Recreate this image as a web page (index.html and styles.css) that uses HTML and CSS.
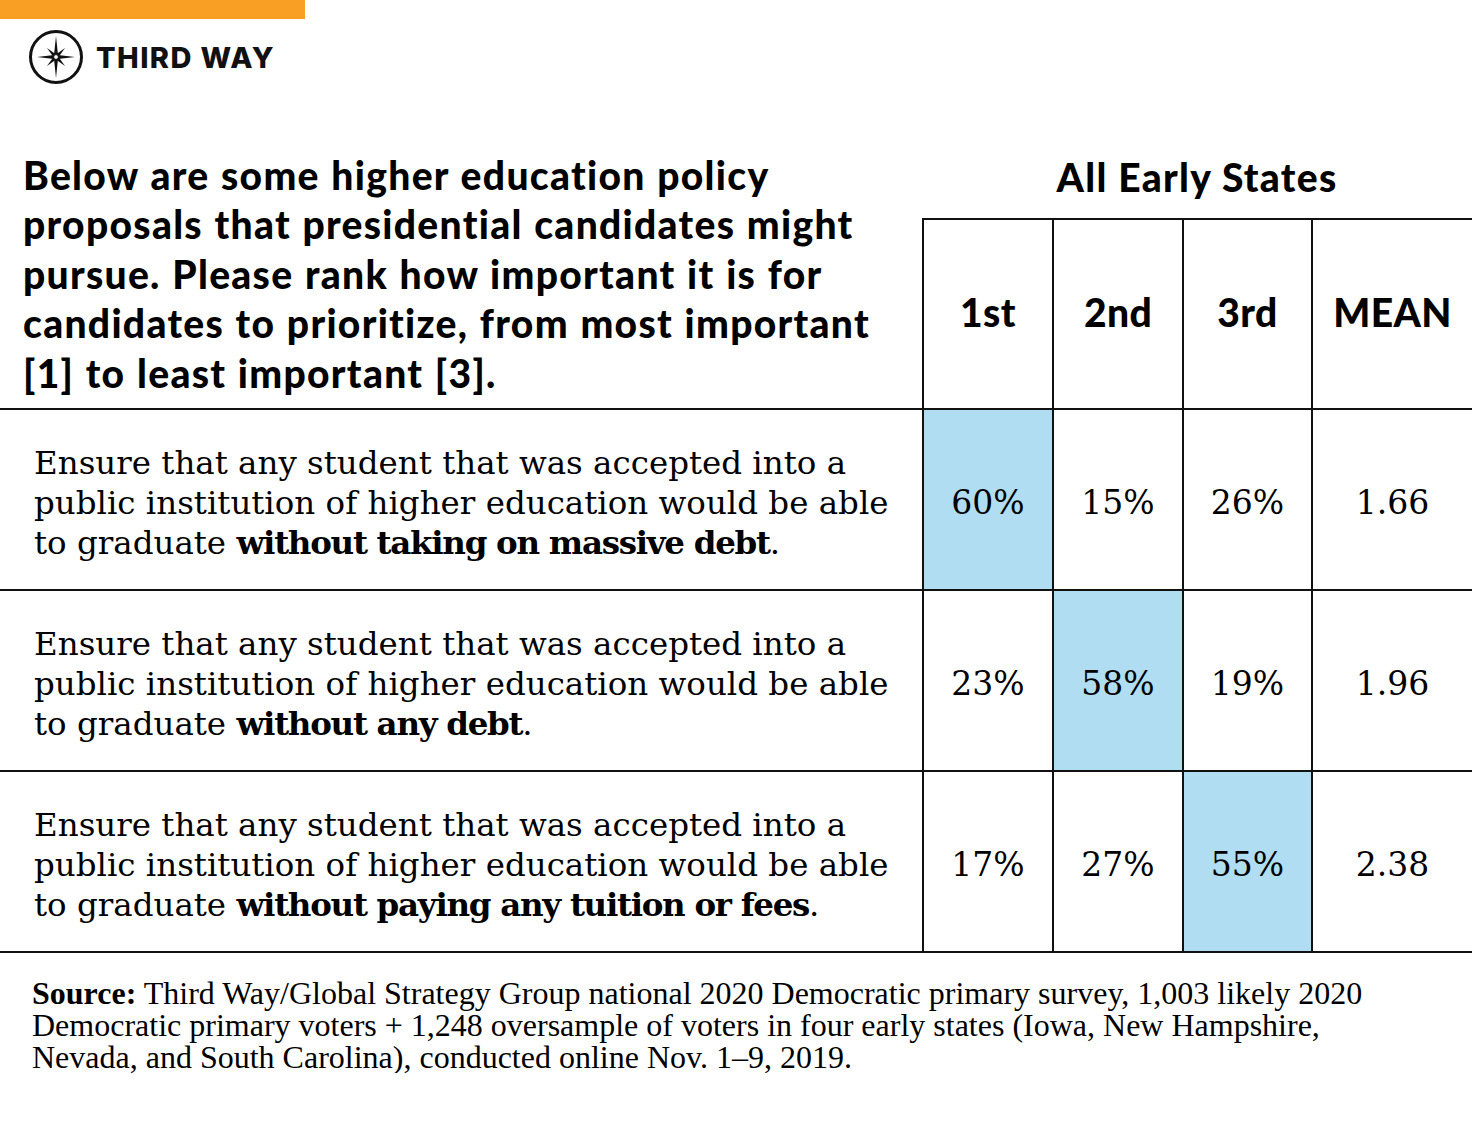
FILE: index.html
```html
<!DOCTYPE html>
<html lang="en">
<head>
<meta charset="utf-8">
<title>Third Way – Higher education policy priorities</title>
<link rel="stylesheet" href="styles.css">
</head>
<body>
<div class="topbar"></div>
<header class="brand">
  <svg class="brand-mark" width="58" height="58" viewBox="0 0 58 58" aria-hidden="true">
    <circle cx="29" cy="29" r="25.5" fill="none" stroke="#111" stroke-width="3"/>
    <polygon points="29,8 31,27 48,29 31,31 29,50 27,31 10,29 27,27" fill="#111"/>
    <polygon points="20,20 30.5,27.5 38,38 27.5,30.5" fill="#111"/>
    <polygon points="38,20 30.5,30.5 20,38 27.5,27.5" fill="#111"/>
    <circle cx="29" cy="29" r="2.4" fill="#fff" stroke="#111" stroke-width="1"/>
  </svg>
  <span class="brand-name">THIRD WAY</span>
</header>

<main class="table">
  <div class="question"><p>Below are some higher education policy<br>proposals that presidential candidates might<br>pursue. Please rank how important it is for<br>candidates to prioritize, from most important<br>[1] to least important [3].</p></div>
  <div class="group-title">All Early States</div>
  <div class="col-head">1st</div>
  <div class="col-head">2nd</div>
  <div class="col-head">3rd</div>
  <div class="col-head">MEAN</div>

  <div class="item"><p>Ensure that any student that was accepted into a public institution of higher education would be able to graduate <b>without taking on massive debt</b>.</p></div>
  <div class="val hl">60%</div>
  <div class="val">15%</div>
  <div class="val">26%</div>
  <div class="val">1.66</div>

  <div class="item"><p>Ensure that any student that was accepted into a public institution of higher education would be able to graduate <b>without any debt</b>.</p></div>
  <div class="val">23%</div>
  <div class="val hl">58%</div>
  <div class="val">19%</div>
  <div class="val">1.96</div>

  <div class="item"><p>Ensure that any student that was accepted into a public institution of higher education would be able to graduate <b>without paying any tuition or fees</b>.</p></div>
  <div class="val">17%</div>
  <div class="val">27%</div>
  <div class="val hl">55%</div>
  <div class="val">2.38</div>
</main>

<footer class="source"><b>Source:</b> Third Way/Global Strategy Group national 2020 Democratic primary survey, 1,003 likely 2020 Democratic primary voters + 1,248 oversample of voters in four early states (Iowa, New Hampshire, Nevada, and South Carolina), conducted online Nov. 1–9, 2019.</footer>
</body>
</html>
```

FILE: styles.css
```css
* { box-sizing: border-box; }

body {
  margin: 0;
  background: #fff;
  color: #000;
  width: 1480px;
}

p { margin: 0; }

.topbar {
  width: 305px;
  height: 19px;
  background: #f9a024;
}

.brand {
  display: flex;
  align-items: center;
  gap: 11px;
  padding: 0 0 0 27px;
  height: 76px;
}

.brand-mark { display: block; }

.brand-name {
  font-family: "Inter", "Liberation Sans", sans-serif;
  font-weight: 800;
  font-size: 29px;
  letter-spacing: 1.4px;
  color: #111;
}

.table {
  display: grid;
  grid-template-columns: 922px 130px 130px 129px 161px;
  grid-template-rows: 63px 192px repeat(3, 181px);
  margin-top: 60px;
  width: 1472px;
}

.question {
  grid-row: 1 / span 2;
  display: flex;
  align-items: flex-end;
  padding: 0 0 10px 23px;
  border-bottom: 2px solid #111;
  font-family: "Lato", "Liberation Sans", sans-serif;
  font-weight: 900;
  font-size: 39px;
  line-height: 49.5px;
  letter-spacing: 1.3px;
  word-spacing: 1px;
  white-space: nowrap;
}

.group-title {
  grid-column: 2 / span 4;
  text-align: center;
  font-family: "Lato", "Liberation Sans", sans-serif;
  font-weight: 900;
  font-size: 39px;
  line-height: 44px;
  letter-spacing: 1.3px;
}

.col-head {
  display: flex;
  align-items: center;
  justify-content: center;
  border-top: 2px solid #111;
  border-left: 2px solid #111;
  border-bottom: 2px solid #111;
  font-family: "Lato", "Liberation Sans", sans-serif;
  font-weight: 900;
  font-size: 39px;
  letter-spacing: 0.4px;
  padding-bottom: 4px;
}

.item {
  display: flex;
  align-items: center;
  padding: 6px 20px 0 34px;
  border-bottom: 2px solid #111;
  font-family: "DejaVu Serif", serif;
  font-size: 32.5px;
  line-height: 40px;
}

.item b {
  font-weight: 700;
  letter-spacing: -1.3px;
}

.val {
  display: flex;
  align-items: center;
  justify-content: center;
  border-left: 2px solid #111;
  border-bottom: 2px solid #111;
  font-family: "DejaVu Serif", serif;
  font-size: 33px;
  padding-top: 6px;
}

.hl { background: #b0ddf1; }

.source {
  padding: 24px 0 0 32px;
  font-family: "Liberation Serif", serif;
  font-size: 32px;
  line-height: 32px;
  width: 1430px;
}

.source b { font-weight: 700; }
```
